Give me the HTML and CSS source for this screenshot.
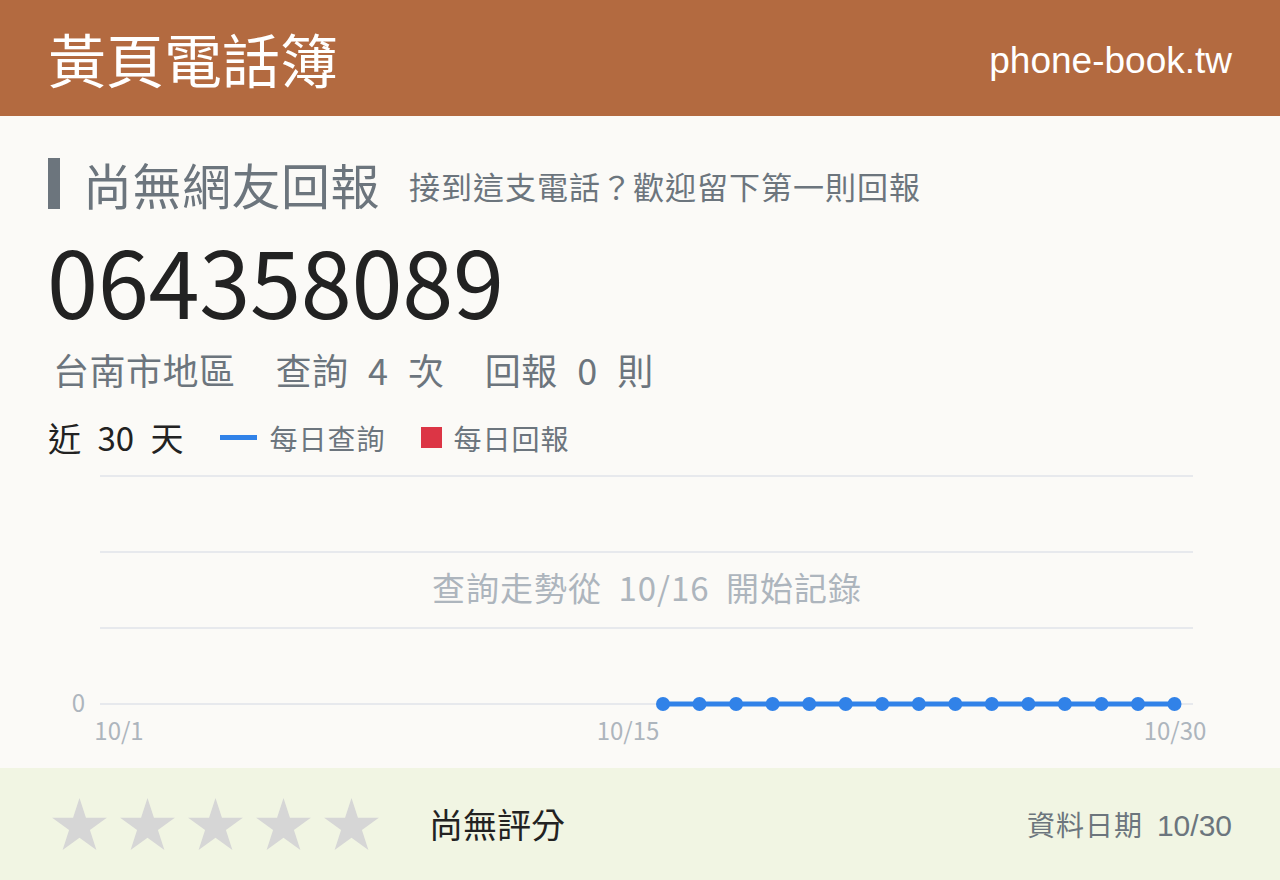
FILE: index.html
```html
<!DOCTYPE html>
<html lang="zh-Hant">
<head>
<meta charset="utf-8">
<title>064358089 - 黃頁電話簿</title>
<link rel="stylesheet" href="styles.css">
</head>
<body>
<header class="site-header">
  <div class="brand">黃頁電話簿</div>
  <div class="domain">phone-book.tw</div>
</header>

<main class="content">
  <div class="status">
    <span class="status-bar"></span>
    <h1 class="status-title">尚無網友回報</h1>
    <span class="status-sub">接到這支電話？歡迎留下第一則回報</span>
  </div>

  <div class="number">064358089</div>

  <div class="stats">
    <span class="stat">台南市地區</span>
    <span class="stat">查詢 4 次</span>
    <span class="stat">回報 0 則</span>
  </div>

  <div class="legend">
    <span class="range">近 30 天</span>
    <span class="key"><span class="swatch swatch-line"></span>每日查詢</span>
    <span class="key"><span class="swatch swatch-box"></span>每日回報</span>
  </div>

  <div class="chart">
    <svg class="chart-svg" viewBox="48 460 1184 308" width="1184" height="308">
      <g class="grid">
        <line x1="100" y1="476" x2="1193" y2="476"/>
        <line x1="100" y1="552" x2="1193" y2="552"/>
        <line x1="100" y1="628" x2="1193" y2="628"/>
        <line x1="100" y1="704" x2="1193" y2="704"/>
      </g>
      <text class="axis" x="85" y="712" text-anchor="end">0</text>
      <text class="axis" x="119" y="740" text-anchor="middle">10/1</text>
      <text class="axis" x="628" y="740" text-anchor="middle">10/15</text>
      <text class="axis" x="1175" y="740" text-anchor="middle">10/30</text>
      <text class="note" x="647" y="601" text-anchor="middle">查詢走勢從 10/16 開始記錄</text>
      <line class="series" x1="663" y1="704" x2="1174.5" y2="704"/>
      <g class="points">
        <circle cx="663" cy="704" r="7"/>
        <circle cx="699.5" cy="704" r="7"/>
        <circle cx="736.1" cy="704" r="7"/>
        <circle cx="772.6" cy="704" r="7"/>
        <circle cx="809.2" cy="704" r="7"/>
        <circle cx="845.7" cy="704" r="7"/>
        <circle cx="882.2" cy="704" r="7"/>
        <circle cx="918.8" cy="704" r="7"/>
        <circle cx="955.3" cy="704" r="7"/>
        <circle cx="991.8" cy="704" r="7"/>
        <circle cx="1028.4" cy="704" r="7"/>
        <circle cx="1064.9" cy="704" r="7"/>
        <circle cx="1101.5" cy="704" r="7"/>
        <circle cx="1138" cy="704" r="7"/>
        <circle cx="1174.5" cy="704" r="7"/>
      </g>
    </svg>
  </div>
</main>

<footer class="rating">
  <div class="stars">
    <svg class="star" viewBox="-27.5 -28.9 55 52.3"><polygon points="0,-28.9 6.49,-8.93 27.49,-8.93 10.5,3.41 16.99,23.38 0,11.04 -16.99,23.38 -10.5,3.41 -27.49,-8.93 -6.49,-8.93"/></svg>
    <svg class="star" viewBox="-27.5 -28.9 55 52.3"><polygon points="0,-28.9 6.49,-8.93 27.49,-8.93 10.5,3.41 16.99,23.38 0,11.04 -16.99,23.38 -10.5,3.41 -27.49,-8.93 -6.49,-8.93"/></svg>
    <svg class="star" viewBox="-27.5 -28.9 55 52.3"><polygon points="0,-28.9 6.49,-8.93 27.49,-8.93 10.5,3.41 16.99,23.38 0,11.04 -16.99,23.38 -10.5,3.41 -27.49,-8.93 -6.49,-8.93"/></svg>
    <svg class="star" viewBox="-27.5 -28.9 55 52.3"><polygon points="0,-28.9 6.49,-8.93 27.49,-8.93 10.5,3.41 16.99,23.38 0,11.04 -16.99,23.38 -10.5,3.41 -27.49,-8.93 -6.49,-8.93"/></svg>
    <svg class="star" viewBox="-27.5 -28.9 55 52.3"><polygon points="0,-28.9 6.49,-8.93 27.49,-8.93 10.5,3.41 16.99,23.38 0,11.04 -16.99,23.38 -10.5,3.41 -27.49,-8.93 -6.49,-8.93"/></svg>
  </div>
  <div class="rating-text">尚無評分</div>
  <div class="updated"><span class="updated-label">資料日期</span><span class="updated-date">10/30</span></div>
</footer>
</body>
</html>
```

FILE: styles.css
```css
* {
  box-sizing: border-box;
}

html, body {
  margin: 0;
  padding: 0;
}

body {
  width: 1280px;
  height: 880px;
  overflow: hidden;
  background: #fbfaf7;
  font-family: "Noto Sans CJK TC", "Noto Sans", sans-serif;
  color: #222;
}

/* top bar */
.site-header {
  height: 116px;
  background: #b36a40;
  color: #fff;
  display: flex;
  align-items: center;
  justify-content: space-between;
  padding: 0 48px 0 48px;
}

.brand {
  font-size: 58px;
  line-height: 1;
  margin-top: -1px;
}

.domain {
  font-family: "Liberation Sans", Arial, sans-serif;
  font-size: 37px;
  line-height: 1;
  margin-top: 4px;
}

/* main card */
.content {
  height: 652px;
  padding: 34px 48px 0;
}

.status {
  display: flex;
  align-items: center;
  height: 66px;
  color: #6c757d;
}

.status-bar {
  width: 12px;
  height: 51px;
  background: #6c757d;
  flex: none;
}

.status-title {
  margin: 0 0 0 23px;
  font-size: 49px;
  font-weight: 400;
  line-height: 1;
  letter-spacing: 0.5px;
}

.status-sub {
  margin-left: 29px;
  font-size: 31px;
  line-height: 1;
  letter-spacing: 1px;
  margin-top: 4px;
}

.number {
  margin-top: 17px;
  height: 93px;
  font-size: 92px;
  line-height: 92px;
  letter-spacing: -0.3px;
  color: #222;
  margin-left: -1px;
}

.stats {
  display: flex;
  align-items: center;
  height: 50px;
  margin-top: 18px;
  padding-left: 5px;
  color: #6c757d;
  font-size: 36px;
  line-height: 1;
  letter-spacing: 0.5px;
  word-spacing: 11px;
}

.stat + .stat {
  margin-left: 40px;
}

.legend {
  display: flex;
  align-items: center;
  height: 45px;
  margin-top: 21px;
  font-size: 28px;
  line-height: 1;
  color: #6c757d;
}

.range {
  font-size: 33px;
  color: #222;
  word-spacing: 9px;
  margin-right: 37px;
}

.key {
  display: flex;
  align-items: center;
  letter-spacing: 1px;
  margin-right: 36px;
}

.swatch {
  display: inline-block;
  margin-right: 12px;
}

.swatch-line {
  width: 37px;
  height: 5px;
  background: #3182e8;
}

.swatch-box {
  width: 21px;
  height: 21px;
  background: #dc3545;
  margin-right: 11px;
}

/* trend chart */
.chart {
  height: 308px;
}

.chart-svg {
  display: block;
}

.grid line {
  stroke: #e7e9ed;
  stroke-width: 2;
}

.axis {
  font-family: "Noto Sans CJK TC", sans-serif;
  font-size: 24px;
  fill: #adb5bd;
}

.note {
  font-family: "Noto Sans CJK TC", sans-serif;
  font-size: 33px;
  fill: #adb5bd;
  letter-spacing: 1px;
  word-spacing: 8px;
}

.series {
  stroke: #3182e8;
  stroke-width: 5;
}

.points circle {
  fill: #3182e8;
}

/* bottom rating strip */
.rating {
  height: 112px;
  background: #f1f5e3;
  display: flex;
  align-items: center;
  padding: 0 48px 0 52px;
}

.stars {
  display: flex;
  gap: 13px;
}

.star {
  width: 55px;
  height: 52px;
  display: block;
}

.star polygon {
  fill: #d6d6d6;
}

.rating-text {
  margin-left: 50px;
  font-size: 34px;
  line-height: 1;
  color: #222;
}

.updated {
  margin-left: auto;
  display: flex;
  align-items: baseline;
  color: #6c757d;
}

.updated-label {
  font-size: 28px;
  letter-spacing: 1px;
  margin-right: 14px;
}

.updated-date {
  font-family: "Liberation Sans", Arial, sans-serif;
  font-size: 30px;
}
```
